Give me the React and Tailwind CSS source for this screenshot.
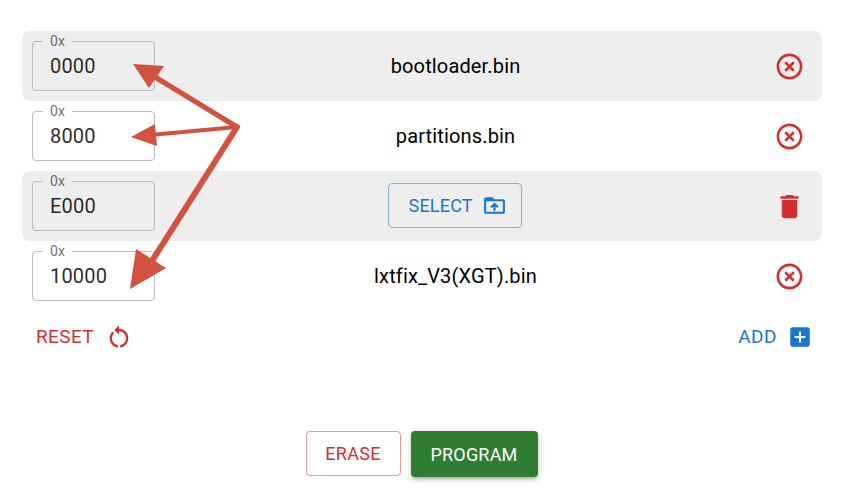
import React from "react";

const Icon = ({ d, size, className }) => (
  <svg viewBox="0 0 24 24" width={size} height={size} fill="currentColor" className={className}>
    <path d={d} />
  </svg>
);

const REMOVE = "M14.59 8L12 10.59 9.41 8 8 9.41 10.59 12 8 14.59 9.41 16 12 13.41 14.59 16 16 14.59 13.41 12 16 9.41 14.59 8zM12 2C6.47 2 2 6.47 2 12s4.47 10 10 10 10-4.47 10-10S17.53 2 12 2zm0 18c-4.41 0-8-3.59-8-8s3.59-8 8-8 8 3.59 8 8-3.59 8-8 8z";
const TRASH = "M6 19c0 1.1.9 2 2 2h8c1.1 0 2-.9 2-2V7H6v12zM19 4h-3.5l-1-1h-5l-1 1H5v2h14V4z";
const FOLDER = "M20 6h-8l-2-2H4c-1.1 0-1.99.9-1.99 2L2 18c0 1.1.9 2 2 2h16c1.1 0 2-.9 2-2V8c0-1.1-.9-2-2-2zm0 12H4V8h16v10zM9.41 14.42 11 12.84V17h2v-4.16l1.59 1.59L16 13.01 12.01 9 8 13.01l1.41 1.41z";
const RESTART = "M12 5V2L8 6l4 4V7c3.31 0 6 2.69 6 6 0 2.97-2.16 5.43-5 5.91v2.02c3.95-.49 7-3.85 7-7.93 0-4.42-3.58-8-8-8zm-6 8c0-1.65.67-3.15 1.76-4.24L6.34 7.34C4.9 8.79 4 10.79 4 13c0 4.08 3.05 7.44 7 7.93v-2.02c-2.84-.48-5-2.94-5-5.91z";
const ADD = "M19 3H5c-1.11 0-2 .9-2 2v14c0 1.1.89 2 2 2h14c1.1 0 2-.9 2-2V5c0-1.11-.9-2-2-2zm-2 10h-4v4h-2v-4H7v-2h4V7h2v4h4v2z";

const rows = [
  { addr: "0000", file: "bootloader.bin", shaded: true },
  { addr: "8000", file: "partitions.bin", shaded: false },
  { addr: "E000", file: null, shaded: true },
  { addr: "10000", file: "lxtfix_V3(XGT).bin", shaded: false },
];

const FileRow = ({ addr, file, shaded }) => (
  <div className={`flex h-[70px] items-center rounded-lg pl-[10px] ${shaded ? "bg-[#eeeeee]" : "bg-white"}`}>
    <div className="relative flex h-[50px] w-[123px] items-center rounded border border-[#bdbdbd] pl-[17px] text-[20px] tracking-[0.19px] text-black/85">
      {addr}
      <span className={`absolute -top-[10px] left-[10px] px-[7px] text-[14px] leading-[18px] tracking-[0.15px] text-black/60 ${shaded ? "bg-[#eeeeee]" : "bg-white"}`}>
        0x
      </span>
    </div>
    <div className={`flex flex-1 justify-center text-[20px] tracking-[0.15px] text-black ${file ? "pl-[2px]" : ""}`}>
      {file ? (
        file
      ) : (
        <button className="mb-px flex h-[45px] w-[134px] items-center gap-[9px] rounded border border-[#1976d2]/50 pl-[20px] text-[18px] tracking-[0.2px] text-[#1976d2]">
          SELECT
          <Icon d={FOLDER} size={25} />
        </button>
      )}
    </div>
    <div className="flex w-[68px] justify-center pl-[2px] text-[#d32f2f]">
      <Icon d={file ? REMOVE : TRASH} size={31} />
    </div>
  </div>
);

// red annotation arrows drawn on top of the form
const Arrows = () => (
  <svg width="849" height="496" className="pointer-events-none absolute top-0 left-0">
    <g fill="none" stroke="#d1523f" strokeLinecap="round">
      <path d="M155 77 L237 127" strokeWidth="5" />
      <path d="M150 135 L237 127" strokeWidth="4" />
      <path d="M145 272 L237 127" strokeWidth="6" />
    </g>
    <polygon points="133,64 164,66 149,88" fill="#d1523f" />
    <polygon points="131,137 155,124 157,146" fill="#d1523f" />
    <polygon points="130,289 136,249 166,268" fill="#d1523f" />
  </svg>
);

export default function App() {
  return (
    <div className="relative h-[496px] w-[849px] overflow-hidden bg-white font-['Roboto',sans-serif]">
      <div className="mx-[22px] w-[800px] pt-[31px]">
        {rows.map((r) => (
          <FileRow key={r.addr} {...r} />
        ))}
        <div className="mt-[10px] flex h-[32px] items-center justify-between pr-[9px] pl-[14px] text-[19px]">
          <div className="flex items-center gap-[11px] tracking-[0.4px] text-[#d32f2f]">
            RESET
            <Icon d={RESTART} size={28} className="-mt-px" />
          </div>
          <div className="flex items-center gap-[10px] tracking-[0.5px] text-[#1976d2]">
            ADD
            <Icon d={ADD} size={26} className="-mt-px" />
          </div>
        </div>
      </div>
      <div className="mt-[78px] flex justify-center gap-[10px] pr-[6px] text-[18px]">
        <button className="h-[45px] w-[95px] rounded border border-[#d32f2f]/50 tracking-[0.3px] text-[#d32f2f]">ERASE</button>
        <button className="h-[46px] w-[127px] rounded bg-[#2e7d32] tracking-[0.2px] text-white shadow-[0_3px_3px_-2px_rgba(0,0,0,0.2),0_3px_4px_0_rgba(0,0,0,0.14),0_1px_8px_0_rgba(0,0,0,0.12)]">
          PROGRAM
        </button>
      </div>
      <Arrows />
    </div>
  );
}
